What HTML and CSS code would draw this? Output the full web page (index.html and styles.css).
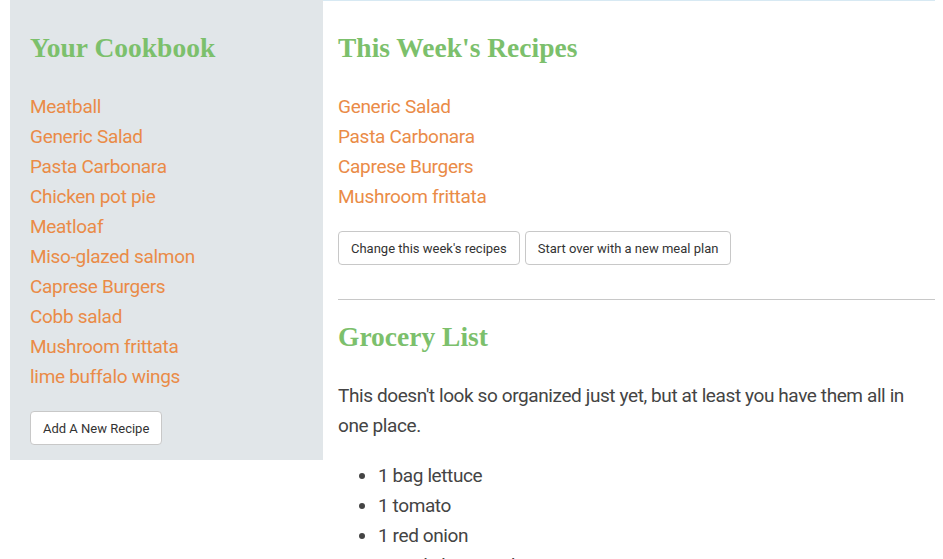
FILE: index.html
```html
<!DOCTYPE html>
<html>
<head>
<meta charset="utf-8">
<link rel="stylesheet" href="styles.css">
</head>
<body>
<div class="page">
  <aside class="sidebar">
    <h2 class="title">Your Cookbook</h2>
    <ul class="links">
      <li><a href="#">Meatball</a></li>
      <li><a href="#">Generic Salad</a></li>
      <li><a href="#">Pasta Carbonara</a></li>
      <li><a href="#">Chicken pot pie</a></li>
      <li><a href="#">Meatloaf</a></li>
      <li><a href="#">Miso-glazed salmon</a></li>
      <li><a href="#">Caprese Burgers</a></li>
      <li><a href="#">Cobb salad</a></li>
      <li><a href="#">Mushroom frittata</a></li>
      <li><a href="#">lime buffalo wings</a></li>
    </ul>
    <button class="btn">Add A New Recipe</button>
  </aside>
  <main class="main">
    <h2 class="title">This Week's Recipes</h2>
    <ul class="links">
      <li><a href="#">Generic Salad</a></li>
      <li><a href="#">Pasta Carbonara</a></li>
      <li><a href="#">Caprese Burgers</a></li>
      <li><a href="#">Mushroom frittata</a></li>
    </ul>
    <div class="actions">
      <button class="btn">Change this week's recipes</button>
      <button class="btn">Start over with a new meal plan</button>
    </div>
    <hr class="rule">
    <h2 class="title">Grocery List</h2>
    <p class="intro">This doesn't look so organized just yet, but at least you have them all in one place.</p>
    <ul class="grocery">
      <li>1 bag lettuce</li>
      <li>1 tomato</li>
      <li>1 red onion</li>
      <li>1 English cucumber</li>
      <li>1 bottle dressing</li>
    </ul>
  </main>
</div>
</body>
</html>
```
FILE: styles.css
```css
html, body {
  margin: 0;
  padding: 0;
  background: #fff;
}
body {
  font-family: Roboto, "Liberation Sans", sans-serif;
  color: #444;
  overflow: hidden;
}
.page {
  display: flex;
  align-items: flex-start;
  padding: 0 8px 0 10px;
}
.sidebar {
  width: 313px;
  flex: none;
  box-sizing: border-box;
  background: #e1e6e9;
  padding: 28px 20px 15px 20px;
}
.main {
  flex: 1;
  border-top: 1px solid #d7e9f3;
  padding: 27px 0 0 15px;
}
.title {
  font-family: "Liberation Serif", serif;
  font-weight: bold;
  font-size: 27.5px;
  line-height: 40px;
  color: #7cc06c;
  margin: 0 0 24px 0;
}
.links {
  list-style: none;
  margin: 0;
  padding: 0;
}
.links li {
  font-size: 19px;
  line-height: 30px;
  letter-spacing: -0.3px;
}
.links a {
  color: #ea8b47;
  text-decoration: none;
}
.btn {
  font-family: Roboto, "Liberation Sans", sans-serif;
  font-size: 13px;
  color: #333;
  background: #fff;
  border: 1px solid #c8c8c8;
  border-radius: 4px;
  height: 34px;
  padding: 0 12px;
  margin: 19px 0 0 0;
}
.actions {
  display: flex;
  gap: 5px;
}
.rule {
  border: 0;
  border-top: 1px solid #c8c8c8;
  margin: 34px 0 17px 0;
}
.intro {
  font-size: 19px;
  line-height: 30px;
  letter-spacing: -0.4px;
  margin: 0 20px 20px 0;
}
.grocery {
  margin: 0;
  padding-left: 40px;
  font-size: 19px;
  line-height: 30px;
  letter-spacing: -0.4px;
}
```
